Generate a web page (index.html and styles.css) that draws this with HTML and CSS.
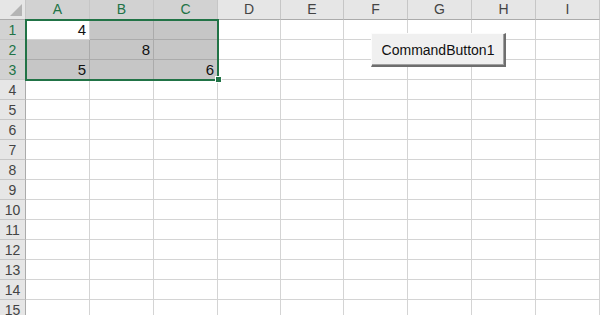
FILE: index.html
```html
<!DOCTYPE html>
<html lang="en">
<head>
    <meta charset="UTF-8">
    <meta name="viewport" content="width=device-width, initial-scale=1.0">
    <title>Sheet1</title>
    <link rel="stylesheet" href="styles.css">
</head>
<body>
    <div class="sheet">
        <div class="row head">
            <div class="corner"><span class="tri"></span></div>
            <div class="ch sel">A</div>
            <div class="ch sel">B</div>
            <div class="ch sel">C</div>
            <div class="ch">D</div>
            <div class="ch">E</div>
            <div class="ch">F</div>
            <div class="ch">G</div>
            <div class="ch">H</div>
            <div class="ch">I</div>
        </div>
        <div class="row">
            <div class="rh sel">1</div>
            <div class="c num">4</div>
            <div class="c in"></div>
            <div class="c in"></div>
            <div class="c"></div><div class="c"></div><div class="c"></div><div class="c"></div><div class="c"></div><div class="c"></div>
        </div>
        <div class="row">
            <div class="rh sel">2</div>
            <div class="c in"></div>
            <div class="c in num">8</div>
            <div class="c in"></div>
            <div class="c"></div><div class="c"></div><div class="c"></div><div class="c"></div><div class="c"></div><div class="c"></div>
        </div>
        <div class="row">
            <div class="rh sel">3</div>
            <div class="c in num">5</div>
            <div class="c in"></div>
            <div class="c in num">6</div>
            <div class="c"></div><div class="c"></div><div class="c"></div><div class="c"></div><div class="c"></div><div class="c"></div>
        </div>
        <div class="row"><div class="rh">4</div><div class="c"></div><div class="c"></div><div class="c"></div><div class="c"></div><div class="c"></div><div class="c"></div><div class="c"></div><div class="c"></div><div class="c"></div></div>
        <div class="row"><div class="rh">5</div><div class="c"></div><div class="c"></div><div class="c"></div><div class="c"></div><div class="c"></div><div class="c"></div><div class="c"></div><div class="c"></div><div class="c"></div></div>
        <div class="row"><div class="rh">6</div><div class="c"></div><div class="c"></div><div class="c"></div><div class="c"></div><div class="c"></div><div class="c"></div><div class="c"></div><div class="c"></div><div class="c"></div></div>
        <div class="row"><div class="rh">7</div><div class="c"></div><div class="c"></div><div class="c"></div><div class="c"></div><div class="c"></div><div class="c"></div><div class="c"></div><div class="c"></div><div class="c"></div></div>
        <div class="row"><div class="rh">8</div><div class="c"></div><div class="c"></div><div class="c"></div><div class="c"></div><div class="c"></div><div class="c"></div><div class="c"></div><div class="c"></div><div class="c"></div></div>
        <div class="row"><div class="rh">9</div><div class="c"></div><div class="c"></div><div class="c"></div><div class="c"></div><div class="c"></div><div class="c"></div><div class="c"></div><div class="c"></div><div class="c"></div></div>
        <div class="row"><div class="rh">10</div><div class="c"></div><div class="c"></div><div class="c"></div><div class="c"></div><div class="c"></div><div class="c"></div><div class="c"></div><div class="c"></div><div class="c"></div></div>
        <div class="row"><div class="rh">11</div><div class="c"></div><div class="c"></div><div class="c"></div><div class="c"></div><div class="c"></div><div class="c"></div><div class="c"></div><div class="c"></div><div class="c"></div></div>
        <div class="row"><div class="rh">12</div><div class="c"></div><div class="c"></div><div class="c"></div><div class="c"></div><div class="c"></div><div class="c"></div><div class="c"></div><div class="c"></div><div class="c"></div></div>
        <div class="row"><div class="rh">13</div><div class="c"></div><div class="c"></div><div class="c"></div><div class="c"></div><div class="c"></div><div class="c"></div><div class="c"></div><div class="c"></div><div class="c"></div></div>
        <div class="row"><div class="rh">14</div><div class="c"></div><div class="c"></div><div class="c"></div><div class="c"></div><div class="c"></div><div class="c"></div><div class="c"></div><div class="c"></div><div class="c"></div></div>
        <div class="row"><div class="rh">15</div><div class="c"></div><div class="c"></div><div class="c"></div><div class="c"></div><div class="c"></div><div class="c"></div><div class="c"></div><div class="c"></div><div class="c"></div></div>

        <!-- selection range A1:C3 -->
        <div class="selection"></div>
        <div class="handle"></div>

        <button class="cmd">CommandButton1</button>
    </div>
</body>
</html>
```

FILE: styles.css
```css
html, body {
    margin: 0;
    padding: 0;
    background: #fff;
    overflow: hidden;
}
.sheet {
    position: relative;
    width: 600px;
    height: 315px;
    overflow: hidden;
    font-family: 'Liberation Sans', Arial, sans-serif;
    color: #222;
}
.row {
    display: flex;
    height: 20px;
}
.row > div {
    box-sizing: border-box;
    flex: 0 0 64px;
    height: 20px;
    border-right: 1px solid #d4d4d4;
    border-bottom: 1px solid #d4d4d4;
}
.row > div:nth-child(1) {
    flex-basis: 26px;
}
.row > div:nth-child(5),
.row > div:nth-child(6) {
    flex-basis: 63px;
}

/* headers */
.head > div {
    background: #e6e6e6;
    border-right-color: #c6c6c6;
    border-bottom-color: #ababab;
}
.corner {
    position: relative;
}
.tri {
    position: absolute;
    right: 3px;
    bottom: 3px;
    width: 0;
    height: 0;
    border-left: 12px solid transparent;
    border-bottom: 12px solid #b4b4b4;
}
.ch {
    text-align: center;
    font-size: 14px;
    line-height: 19px;
    color: #444;
}
.rh {
    background: #e6e6e6;
    text-align: center;
    font-size: 14px;
    line-height: 20px;
    color: #444;
    border-right-color: #ababab !important;
    border-bottom-color: #c6c6c6 !important;
}
.ch.sel,
.rh.sel {
    background: #d2d2d2;
    color: #217346;
}

/* cells */
.c {
    font-size: 15px;
    line-height: 20px;
}
.c.in {
    background: #c6c6c6;
    border-right-color: #ababab;
    border-bottom-color: #ababab;
}
.num {
    text-align: right;
    padding-right: 3px;
    color: #111;
}

.selection {
    position: absolute;
    left: 25px;
    top: 19px;
    width: 194px;
    height: 62px;
    box-sizing: border-box;
    border: 2px solid #217346;
}
.handle {
    position: absolute;
    left: 215px;
    top: 76px;
    width: 5px;
    height: 5px;
    background: #217346;
    border: 1px solid #fff;
}

.cmd {
    position: absolute;
    left: 371px;
    top: 33px;
    width: 135px;
    height: 34px;
    box-sizing: border-box;
    background: #f0f0f0;
    border: none;
    border-top: 1px solid #fcfcfc;
    border-left: 1px solid #fcfcfc;
    border-right: 2px solid #6e6e6e;
    border-bottom: 2px solid #6e6e6e;
    box-shadow: inset -1px -1px 0 #a0a0a0;
    font-family: 'Liberation Sans', Arial, sans-serif;
    font-size: 14px;
    color: #111;
    padding: 0;
}
```
